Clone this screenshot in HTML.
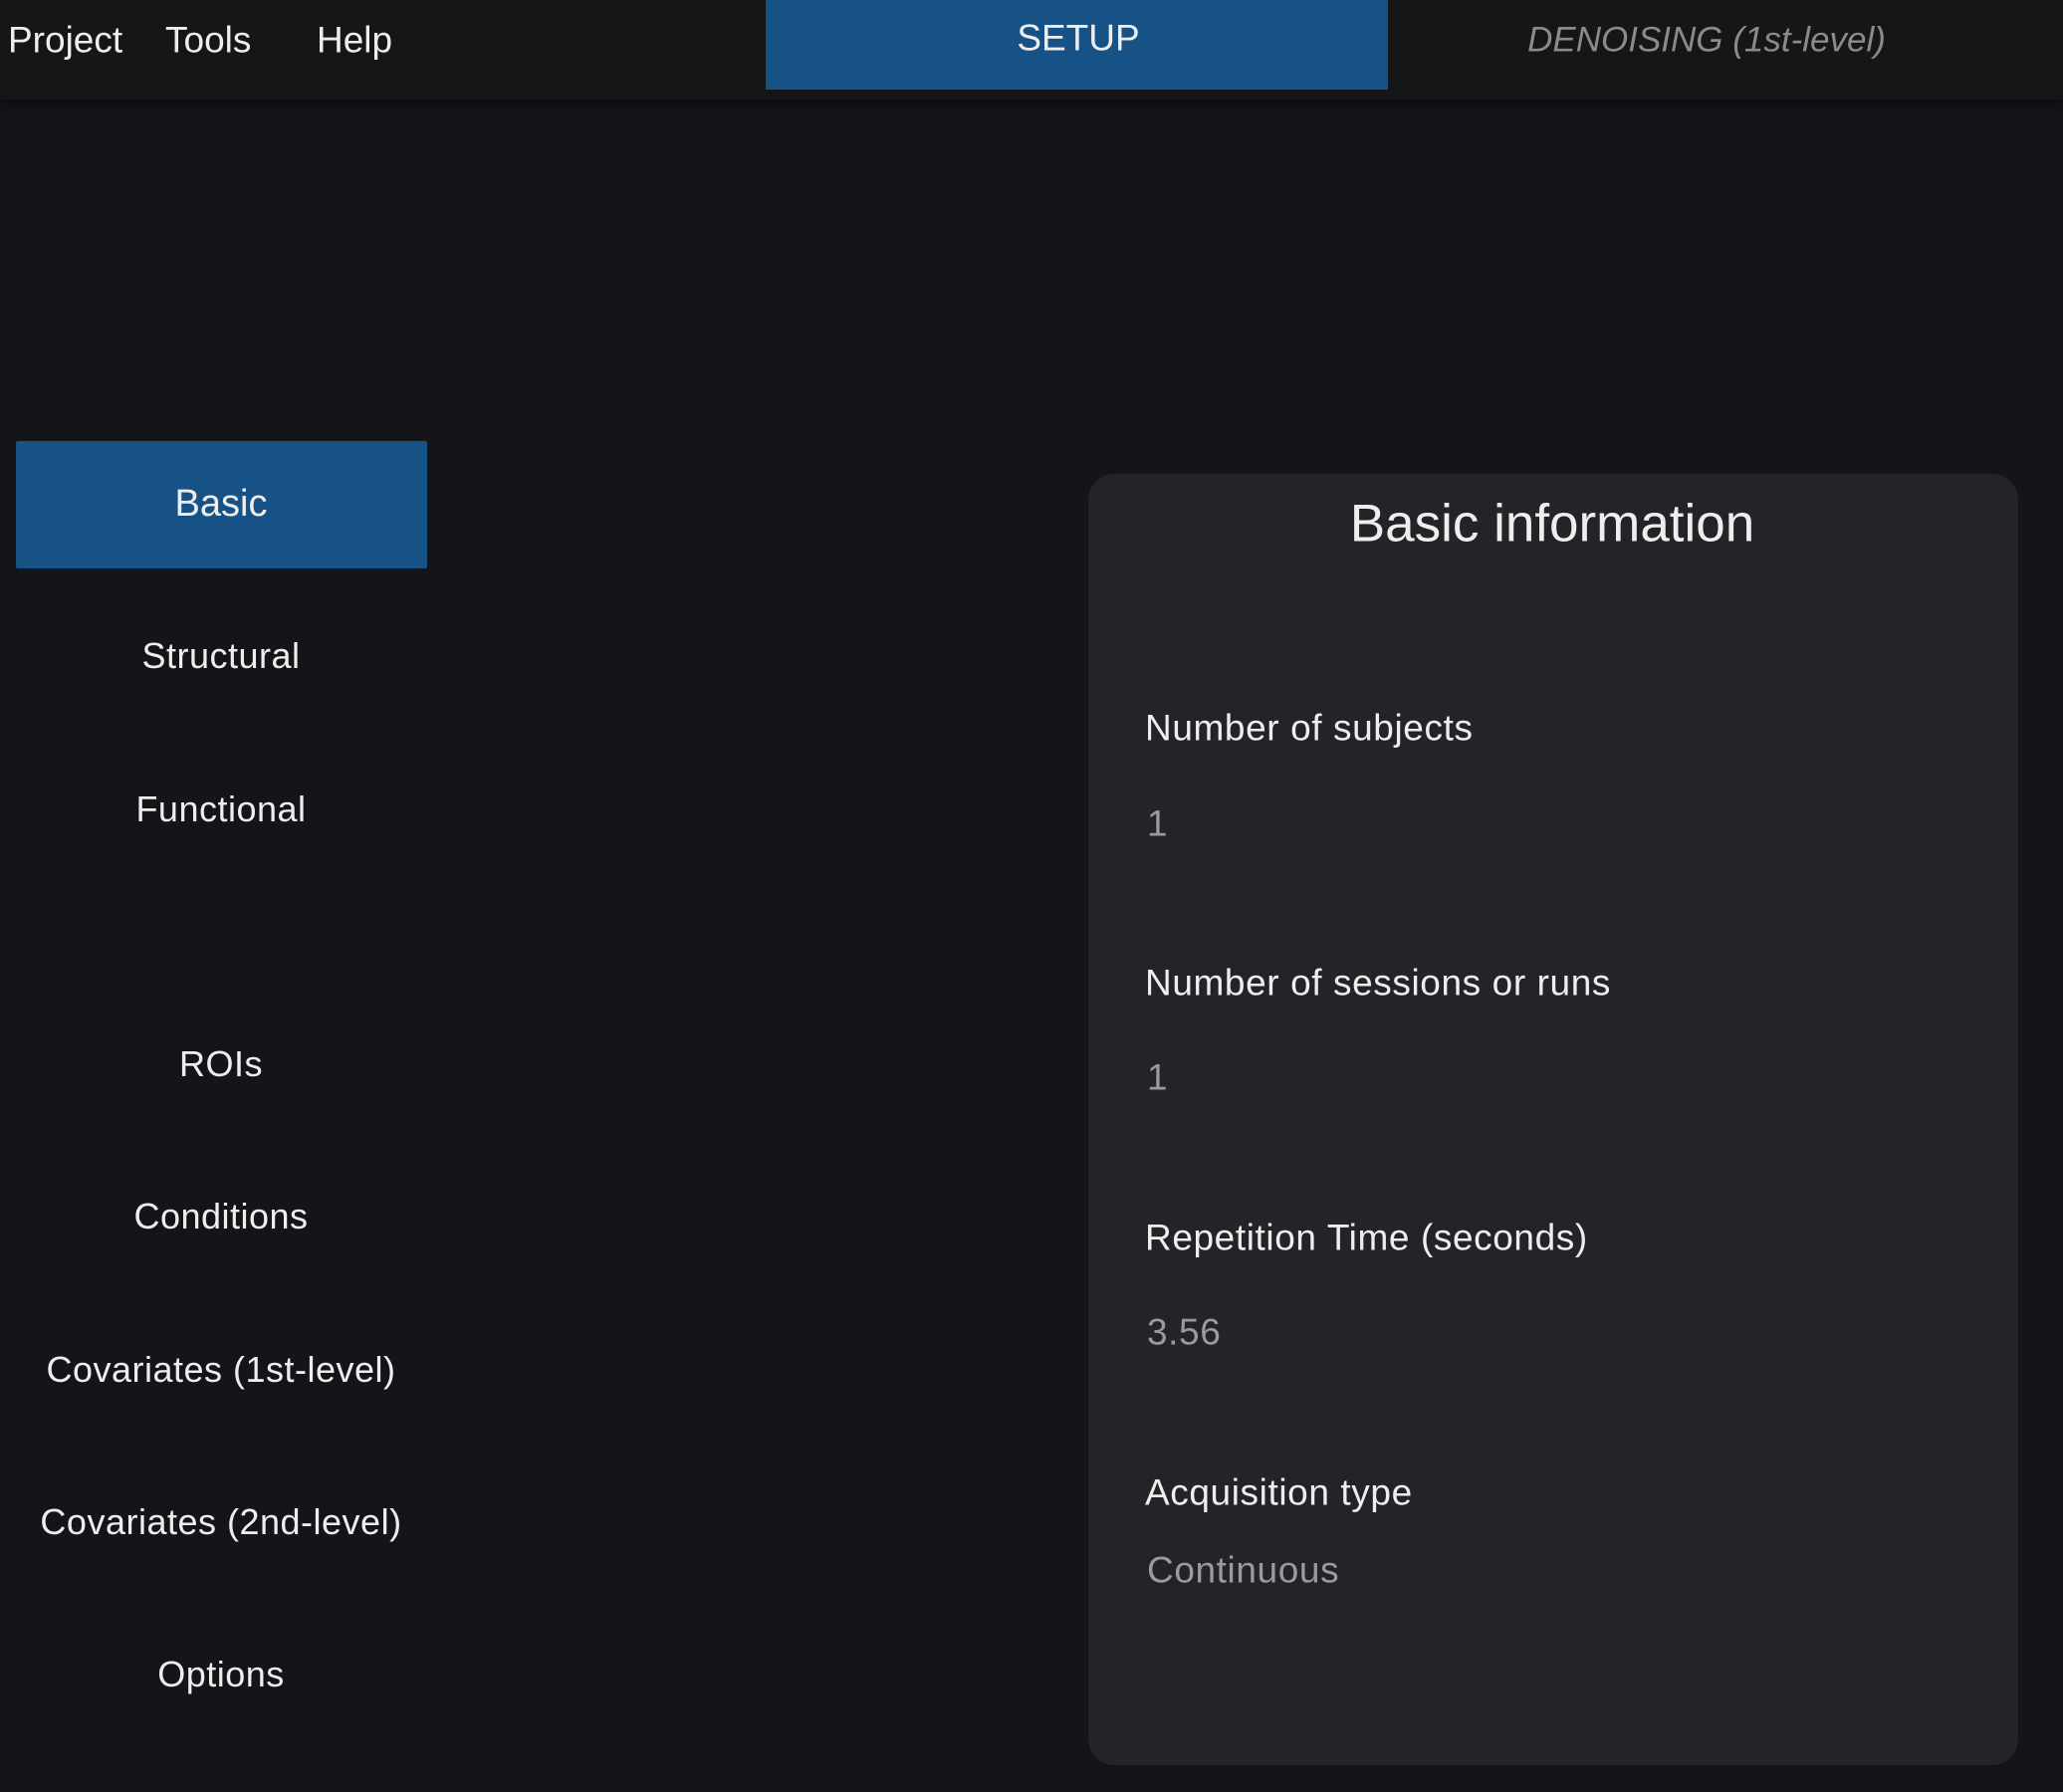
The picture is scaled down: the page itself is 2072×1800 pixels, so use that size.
<!DOCTYPE html>
<html><head><style>
body{margin:0;width:2072px;height:1800px;background:#141518;font-family:"Liberation Sans",sans-serif;position:relative;overflow:hidden;color:#eee}
.a{position:absolute;white-space:nowrap;line-height:1}
.top{position:absolute;left:0;top:0;width:2072px;height:100px;background:#151618;box-shadow:0 4px 10px #0c0d0f}
.c{transform:translate(-50%,-50%)}
.l{transform:translateY(-50%)}
.s{font-size:36px;letter-spacing:0.5px}
.p{font-size:37px;letter-spacing:0.6px}
</style></head><body>
<div class="top"></div>
<div class="a" style="left:769px;top:0;width:625px;height:90px;background:#175287"></div>
<div class="a l" style="left:8px;top:40px;font-size:37px">Project</div>
<div class="a l" style="left:166px;top:40px;font-size:37px">Tools</div>
<div class="a l" style="left:318px;top:40px;font-size:37px">Help</div>
<div class="a c" style="left:1083px;top:38px;font-size:37px">SETUP</div>
<div class="a c" style="left:1714px;top:40px;font-size:35px;font-style:italic;color:#8a8b8d">DENOISING (1st-level)</div>
<div class="a" style="left:16px;top:443px;width:413px;height:128px;background:#175287;border-radius:2px"></div>
<div class="a c" style="left:222px;top:506px;font-size:38px">Basic</div>
<div class="a c s" style="left:222px;top:659px">Structural</div>
<div class="a c s" style="left:222px;top:813px">Functional</div>
<div class="a c s" style="left:222px;top:1069px">ROIs</div>
<div class="a c s" style="left:222px;top:1222px">Conditions</div>
<div class="a c s" style="left:222px;top:1376px">Covariates (1st-level)</div>
<div class="a c s" style="left:222px;top:1529px">Covariates (2nd-level)</div>
<div class="a c s" style="left:222px;top:1682px">Options</div>
<div class="a" style="left:1093px;top:476px;width:934px;height:1297px;background:#232427;border-radius:26px"></div>
<div class="a c" style="left:1559px;top:526px;font-size:53px">Basic information</div>
<div class="a l p" style="left:1150px;top:731px">Number of subjects</div>
<div class="a l p" style="left:1152px;top:827px;color:#9a9b9d">1</div>
<div class="a l p" style="left:1150px;top:987px">Number of sessions or runs</div>
<div class="a l p" style="left:1152px;top:1082px;color:#9a9b9d">1</div>
<div class="a l p" style="left:1150px;top:1243px">Repetition Time (seconds)</div>
<div class="a l p" style="left:1152px;top:1338px;color:#9a9b9d">3.56</div>
<div class="a l p" style="left:1150px;top:1499px">Acquisition type</div>
<div class="a l p" style="left:1152px;top:1577px;color:#9a9b9d">Continuous</div>
</body></html>
